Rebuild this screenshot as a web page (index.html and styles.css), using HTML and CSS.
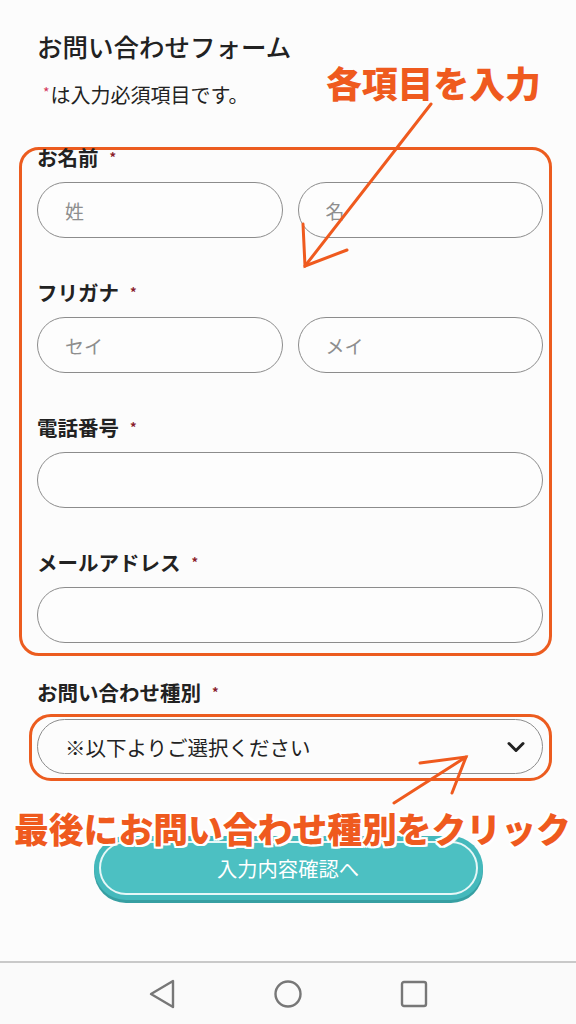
FILE: index.html
```html
<!DOCTYPE html>
<html lang="ja">
  <head>
    <meta charset="UTF-8" />
    <meta name="viewport" content="width=device-width, initial-scale=1.0" />
    <title>お問い合わせフォーム</title>
    <link rel="stylesheet" href="styles.css">
  </head>
  <body>
    <div class="screen">
      <main class="page">
        <h1 class="title">お問い合わせフォーム</h1>
        <p class="note"><span class="req">*</span>は入力必須項目です。</p>

        <div class="mark-box">
          <div class="field first">
            <label class="label">お名前<span class="req">*</span></label>
            <div class="pair">
              <input class="text-input" type="text" placeholder="姓" />
              <input class="text-input" type="text" placeholder="名" />
            </div>
          </div>
          <div class="field">
            <label class="label">フリガナ<span class="req">*</span></label>
            <div class="pair">
              <input class="text-input" type="text" placeholder="セイ" />
              <input class="text-input" type="text" placeholder="メイ" />
            </div>
          </div>
          <div class="field">
            <label class="label">電話番号<span class="req">*</span></label>
            <input class="text-input" type="tel" />
          </div>
          <div class="field last">
            <label class="label">メールアドレス<span class="req">*</span></label>
            <input class="text-input" type="email" />
          </div>
        </div>

        <div class="field kind">
          <label class="label">お問い合わせ種別<span class="req">*</span></label>
          <div class="mark-select">
            <div class="select">
              <span>※以下よりご選択ください</span>
              <svg class="chevron" width="20" height="14" viewBox="0 0 20 14">
                <path d="M3 3.5 L10 10.5 L17 3.5" fill="none" stroke="#222" stroke-width="3" stroke-linecap="round" stroke-linejoin="round" />
              </svg>
            </div>
          </div>
        </div>

        <div class="submit-row">
          <button class="submit" type="button"><span>入力内容確認へ</span></button>
        </div>
      </main>

      <nav class="navbar">
        <svg width="28" height="32" viewBox="0 0 28 32">
          <path d="M3 16 L25 3 L25 29 Z" fill="none" stroke="#777" stroke-width="2.4" stroke-linejoin="round" />
        </svg>
        <svg width="30" height="30" viewBox="0 0 30 30">
          <circle cx="15" cy="15" r="12.5" fill="none" stroke="#777" stroke-width="2.4" />
        </svg>
        <svg width="28" height="28" viewBox="0 0 28 28">
          <rect x="2" y="2" width="24" height="24" rx="2" fill="none" stroke="#777" stroke-width="2.4" />
        </svg>
      </nav>

      <!-- annotations drawn over the screenshot -->
      <div class="callout callout-top">各項目を入力</div>
      <div class="callout callout-bottom">最後にお問い合わせ種別をクリック</div>
      <svg class="arrows" width="576" height="1024" viewBox="0 0 576 1024">
        <g fill="none" stroke="#ef5a1e" stroke-width="3" stroke-linecap="round">
          <path d="M431 104 L305 266" />
          <path d="M303 224 L305 266 L347 250" />
          <path d="M394 803 L466 757" />
          <path d="M420 763 L466 757 L452 793" />
        </g>
      </svg>
    </div>
  </body>
</html>
```

FILE: styles.css
```css
* {
  box-sizing: border-box;
}
body {
  margin: 0;
  background: #fcfcfc;
  font-family: "Noto Sans CJK JP", "Noto Sans", sans-serif;
  color: #222;
}
.screen {
  position: relative;
  width: 576px;
  height: 1024px;
  display: flex;
  flex-direction: column;
  overflow: hidden;
}
.page {
  flex: 1;
  padding: 30px 33px 0 37px;
}
.title {
  margin: 0 0 16px;
  font-size: 25.5px;
  line-height: 32px;
  font-weight: 500;
}
.note {
  margin: 0;
  padding-left: 6px;
  font-size: 20px;
  line-height: 28px;
}
.note .req {
  color: #d4365a;
  font-size: 14px;
  vertical-align: 5px;
  margin-right: 1px;
}
.req {
  color: #8a1c2c;
  font-size: 13px;
  vertical-align: 4px;
  margin-left: 11px;
}
.note .req {
  margin-left: 0;
}

.mark-box {
  margin: 38px -9px 0 -18px;
  border: 3px solid #ec5c1f;
  border-radius: 20px;
  padding: 0 6px 10px 15px;
}
.field {
  margin-bottom: 40px;
}
.field.first {
  margin-top: -7px;
}
.field.last {
  margin-bottom: 0;
}
.label {
  display: block;
  margin-bottom: 11px;
  font-size: 20.5px;
  line-height: 28px;
  font-weight: 700;
}
.pair {
  display: grid;
  grid-template-columns: 1fr 1fr;
  gap: 15px;
}
.text-input {
  display: block;
  width: 100%;
  height: 56px;
  border: 1.5px solid #8c8c8c;
  border-radius: 28px;
  background: #fdfdfd;
  padding: 0 0 0 27px;
  font-family: inherit;
  font-size: 19px;
  color: #222;
  outline: none;
}
.text-input::placeholder {
  color: #8e8e8e;
}

.field.kind {
  margin: 22px 0 0;
}
.field.kind .label {
  margin-bottom: 0;
}
.mark-select {
  margin: 8px -9px 0 -8px;
  border: 3px solid #ec5c1f;
  border-radius: 22px;
  padding: 2px 6px 4px 5px;
}
.select {
  display: flex;
  align-items: center;
  justify-content: space-between;
  height: 55px;
  border: 1.5px solid #8c8c8c;
  border-radius: 28px;
  padding: 0 16px 0 27px;
  font-size: 20.5px;
  color: #222;
}
.chevron {
  display: block;
}

.submit-row {
  display: flex;
  justify-content: center;
  margin: 55px 0 0 -4px;
}
.submit {
  width: 389px;
  height: 64px;
  padding: 5px;
  border: none;
  border-radius: 32px;
  background: #44b9bc;
  box-shadow: 0 3px 0 #369fa2;
  font-family: inherit;
}
.submit span {
  display: flex;
  align-items: center;
  justify-content: center;
  height: 100%;
  border: 2px solid #e6f7f7;
  border-radius: 28px;
  background: #4cc0c2;
  color: #fff;
  font-size: 20.3px;
  line-height: 24px;
}

.navbar {
  height: 63px;
  border-top: 2px solid #c9c9c9;
  background: #fafafa;
  display: flex;
  align-items: center;
  justify-content: center;
  gap: 97px;
}

.callout {
  position: absolute;
  color: #ef5a1e;
  font-weight: 900;
  white-space: nowrap;
  letter-spacing: 0;
}
.callout-top {
  left: 326px;
  top: 62px;
  font-size: 35.8px;
  line-height: 40px;
}
.callout-bottom {
  left: 14px;
  top: 811px;
  font-size: 34.8px;
  line-height: 34px;
  text-shadow: 2px 0 0 #fff, -2px 0 0 #fff, 0 2px 0 #fff, 0 -2px 0 #fff,
    2px 2px 0 #fff, -2px -2px 0 #fff, 2px -2px 0 #fff, -2px 2px 0 #fff;
}
.arrows {
  position: absolute;
  left: 0;
  top: 0;
  pointer-events: none;
}
```
